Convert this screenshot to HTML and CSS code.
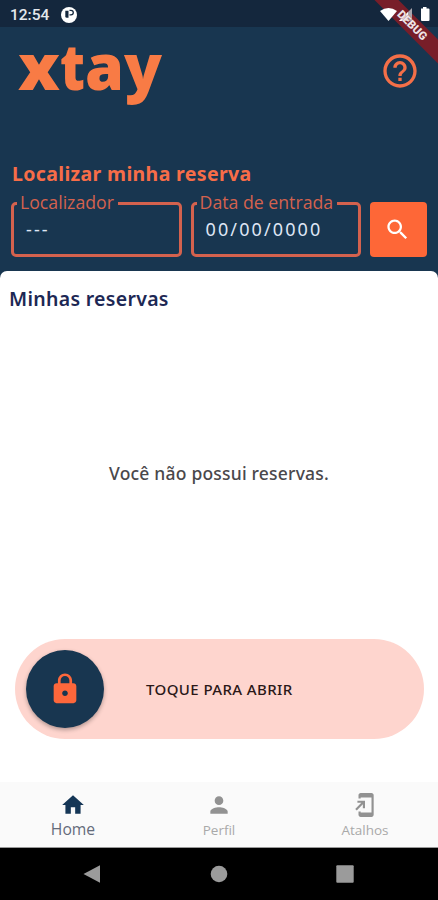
FILE: index.html
```html
<!DOCTYPE html>
<html lang="pt-BR">

<head>
    <meta charset="UTF-8">
    <meta name="viewport" content="width=device-width, initial-scale=1.0">
    <title>xtay</title>
    <link rel="stylesheet" href="styles.css">
</head>

<body>
    <div class="app">
        <div class="status-bar">
            <span class="clock">12:54</span>
            <svg class="status-app" viewBox="0 0 16 16">
                <circle cx="8" cy="8" r="8" fill="#fff" />
                <path d="M4.300 3.800h3.200v7H5.800q-1.500 0-1.500-1.500z" fill="#14273d" />
                <path d="M8.500 3.300h1.500a2.300 2.300 0 0 1 0 4.600H8.500" fill="none" stroke="#14273d" stroke-width="1.300" />
            </svg>
            <svg class="status-icons" viewBox="0 0 52 16">
                <path d="M0 4Q8.500-2 17 4L8.500 14z" fill="#fff" />
                <path d="M32 1V14H19z" fill="#a9a4ac" />
                <path d="M28 5V14H19z" fill="#fff" />
                <path d="M41 1.500h2V0h3.500v1.500h2q1 0 1 1V13q0 1-1 1H42q-1 0-1-1z" fill="#fff" />
            </svg>
        </div>
        <div class="debug-ribbon"></div>
        <div class="debug-ribbon debug-text">DEBUG</div>

        <header class="header">
            <div class="brand-row">
                <svg class="logo" viewBox="0 0 150 70" role="img" aria-label="xtay">
                    <text y="49"><tspan x="1" textLength="42" lengthAdjust="spacingAndGlyphs">x</tspan><tspan x="43" textLength="25" lengthAdjust="spacingAndGlyphs">t</tspan><tspan x="68" textLength="39" lengthAdjust="spacingAndGlyphs">a</tspan><tspan x="107" textLength="38" lengthAdjust="spacingAndGlyphs">y</tspan></text>
                </svg>
                <svg class="help" viewBox="0 0 24 24">
                    <path d="M11 18h2v-2h-2v2zm1-16C6.480 2 2 6.480 2 12s4.480 10 10 10 10-4.480 10-10S17.520 2 12 2zm0 18c-4.410 0-8-3.590-8-8s3.590-8 8-8 8 3.590 8 8-3.590 8-8 8zm0-14c-2.210 0-4 1.790-4 4h2c0-1.100.9-2 2-2s2 .9 2 2c0 2-3 1.750-3 5h2c0-2.250 3-2.500 3-5 0-2.210-1.790-4-4-4z" />
                </svg>
            </div>
            <h1>Localizar minha reserva</h1>
            <div class="search-form">
                <fieldset class="field">
                    <legend>Localizador</legend>
                    <span class="value">---</span>
                </fieldset>
                <fieldset class="field">
                    <legend>Data de entrada</legend>
                    <span class="value">00/00/0000</span>
                </fieldset>
                <button class="search-button" aria-label="Buscar">
                    <svg viewBox="0 0 24 24">
                        <path d="M15.500 14h-.79l-.28-.27C15.410 12.590 16 11.110 16 9.500 16 5.910 13.090 3 9.500 3S3 5.910 3 9.500 5.910 16 9.500 16c1.610 0 3.090-.59 4.230-1.570l.27.28v.79l5 4.990L20.490 19l-4.990-5zm-6 0C7.010 14 5 11.990 5 9.500S7.010 5 9.500 5 14 7.010 14 9.500 11.990 14 9.500 14z" />
                    </svg>
                </button>
            </div>
        </header>

        <main class="sheet">
            <h2>Minhas reservas</h2>
            <p class="empty">Você não possui reservas.</p>
            <div class="slider">
                <div class="knob">
                    <svg viewBox="0 0 24 24">
                        <path d="M18 8h-1V6c0-2.760-2.240-5-5-5S7 3.240 7 6v2H6c-1.100 0-2 .9-2 2v10c0 1.100.9 2 2 2h12c1.100 0 2-.9 2-2V10c0-1.100-.9-2-2-2zm-6 9c-1.100 0-2-.9-2-2s.9-2 2-2 2 .9 2 2-.9 2-2 2zm3.100-9H8.900V6c0-1.710 1.390-3.100 3.100-3.100s3.100 1.390 3.100 3.100v2z" />
                    </svg>
                </div>
                <span class="slider-text">TOQUE PARA ABRIR</span>
            </div>
        </main>

        <nav class="tabs">
            <div class="tab active">
                <svg viewBox="0 0 24 24">
                    <path d="M10 20v-6h4v6h5v-8h3L12 3 2 12h3v8z" />
                </svg>
                <span>Home</span>
            </div>
            <div class="tab">
                <svg viewBox="0 0 24 24">
                    <path d="M12 12c2.210 0 4-1.790 4-4s-1.790-4-4-4-4 1.790-4 4 1.790 4 4 4zm0 2c-2.670 0-8 1.340-8 4v2h16v-2c0-2.660-5.330-4-8-4z" />
                </svg>
                <span>Perfil</span>
            </div>
            <div class="tab">
                <svg viewBox="0 0 24 24">
                    <path d="M18 1.010L8 1c-1.100 0-2 .9-2 2v3h2V5h10v14H8v-1H6v3c0 1.100.9 2 2 2h10c1.100 0 2-.9 2-2V3c0-1.100-.9-1.990-2-1.990zM10 15h2V8H5v2h3.590L3 15.590 4.410 17 10 11.410z" />
                </svg>
                <span>Atalhos</span>
            </div>
        </nav>

        <div class="system-nav">
            <svg viewBox="0 0 20 20"><path d="M18 1.300v17.400L1.500 10z" /></svg>
            <svg viewBox="0 0 20 20"><circle cx="10" cy="10" r="8.300" /></svg>
            <svg viewBox="0 0 20 20"><rect x="1.300" y="1.300" width="17.400" height="17.400" rx="1" /></svg>
        </div>
    </div>
</body>

</html>
```
FILE: styles.css
```css
* {
    box-sizing: border-box;
}

body {
    margin: 0;
    font-family: "Noto Sans", "Open Sans", sans-serif;
    background-color: #183650;
}

.app {
    position: relative;
    display: flex;
    flex-direction: column;
    width: 438px;
    height: 900px;
    overflow: hidden;
}

.status-bar {
    display: flex;
    align-items: center;
    height: 27px;
    padding: 2px 6px 0 10px;
    background-color: #14273d;
}

.clock {
    width: 51px;
    font-family: Roboto, sans-serif;
    font-size: 15.5px;
    font-weight: 500;
    color: #e4e8ec;
}

.status-app {
    width: 16px;
    height: 16px;
}

.status-icons {
    position: relative;
    z-index: 2;
    width: 52px;
    height: 16px;
    margin-left: auto;
}

/* ribbon over the top right corner, status icons sit between it and its text */
.debug-ribbon {
    position: absolute;
    z-index: 1;
    top: 17px;
    right: -36px;
    width: 124px;
    height: 17px;
    background-color: #781e29;
    transform: rotate(45deg);
}

.debug-text {
    z-index: 3;
    line-height: 17px;
    text-align: center;
    font-family: Roboto, sans-serif;
    font-size: 11.5px;
    font-weight: 900;
    color: #eee3e5;
    background-color: transparent;
    text-shadow: 0 0 1px #781e29;
}

.header {
    height: 244px;
    padding: 10px 11px 0;
}

.brand-row {
    display: flex;
    justify-content: space-between;
    height: 123px;
    padding: 4px 7px 0 6px;
}

.logo {
    width: 150px;
    height: 70px;
    overflow: visible;
}

.logo text {
    font-family: "Noto Sans", sans-serif;
    font-size: 64px;
    font-weight: 900;
    fill: #f87b45;
}

.help {
    width: 40px;
    height: 40px;
    margin-top: 10px;
    fill: #f46f48;
}

h1 {
    margin: 0 0 5px 1px;
    font-size: 19.5px;
    line-height: 27px;
    font-weight: 700;
    letter-spacing: 0.35px;
    color: #f76d48;
}

.search-form {
    display: flex;
    align-items: flex-end;
    gap: 9px;
    height: 65px;
}

.field {
    width: 171px;
    height: 65px;
    min-width: 0;
    margin: 0;
    padding: 1px 0 0 12px;
    border: 3px solid #d4624e;
    border-radius: 5px;
    color: #dfe6f5;
    font-size: 18px;
}

.field legend {
    height: 23px;
    margin-left: -9px;
    padding: 0 4px 0 3px;
    font-family: "Open Sans", sans-serif;
    font-size: 17.7px;
    line-height: 20px;
    color: #d4624e;
    white-space: nowrap;
}

.value {
    display: block;
    line-height: 26px;
    letter-spacing: 2.1px;
}

.search-button {
    display: flex;
    align-items: center;
    justify-content: center;
    width: 57px;
    height: 55px;
    padding: 0 3px 0 0;
    border: 0;
    border-radius: 4px;
    background-color: #fe6737;
}

.search-button svg {
    width: 27px;
    height: 27px;
    fill: #fff;
}

.sheet {
    height: 511px;
    padding: 14px 15px 0;
    border-radius: 7px 7px 0 0;
    background-color: #fff;
}

h2 {
    margin: 0 0 0 -6px;
    font-size: 19.5px;
    line-height: 28px;
    font-weight: 650;
    letter-spacing: 0.3px;
    color: #1d2854;
}

.empty {
    margin: 147px 0 153px;
    text-align: center;
    font-size: 17.5px;
    line-height: 26px;
    font-weight: 500;
    letter-spacing: 0.2px;
    color: #4a484b;
}

.slider {
    display: flex;
    align-items: center;
    width: 409px;
    height: 100px;
    padding-left: 11px;
    border-radius: 50px;
    background-color: #fed5ce;
}

.knob {
    display: flex;
    align-items: center;
    justify-content: center;
    width: 78px;
    height: 78px;
    border-radius: 50%;
    background-color: #183650;
    box-shadow: 0 2px 4px rgba(0, 0, 0, 0.3);
}

.knob svg {
    width: 34px;
    height: 34px;
    fill: #fd673b;
}

.slider-text {
    margin-left: 42px;
    font-size: 15px;
    font-weight: 500;
    letter-spacing: 0.4px;
    color: #2b1818;
}

.tabs {
    display: flex;
    height: 66px;
    border-bottom: 1px solid #999;
    background-color: #fafafa;
}

.tab {
    display: flex;
    flex: 1;
    flex-direction: column;
    align-items: center;
    padding-top: 10px;
    font-family: "Open Sans", sans-serif;
    font-size: 13.5px;
    line-height: 22px;
    color: #a9a9a9;
}

.tab svg {
    width: 26px;
    height: 26px;
    margin-bottom: 1px;
    fill: #929292;
}

.tab.active {
    font-size: 15.7px;
    line-height: 20px;
    color: #646b7a;
}

.tab.active svg {
    fill: #153656;
}

.system-nav {
    display: flex;
    justify-content: space-between;
    height: 52px;
    padding: 16px 83px 0 82px;
    background-color: #000;
}

.system-nav svg {
    width: 20px;
    height: 20px;
    fill: #9b9b9b;
}
```
